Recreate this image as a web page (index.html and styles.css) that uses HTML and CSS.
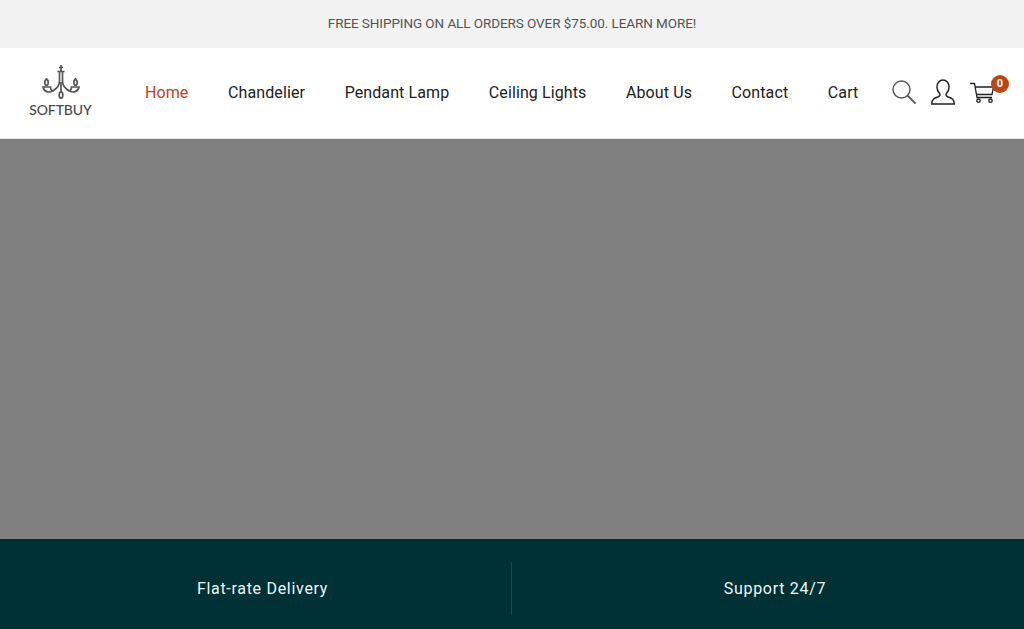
FILE: index.html
```html
<!DOCTYPE html>
<html>
<head>
    <title>Softbuy</title>
    <link rel="stylesheet" href="styles.css">
</head>
<body>
    <div class="top-bar">FREE SHIPPING ON ALL ORDERS OVER $75.00. LEARN MORE!</div>

    <header class="site-header">
        <a class="logo" href="#">
            <svg class="logo-mark" width="40" height="38" viewBox="0 0 40 38" fill="none" stroke="#555" stroke-width="1.700">
                <path d="M20 0v6M18 2.500h4M16.500 6.500h7"/>
                <path d="M18.500 7v9c0 5-3 8-7 10M21.500 7v9c0 5 3 8 7 10"/>
                <path d="M20 17v9"/>
                <path d="M2 22h7.500c0 2.500 1 3.500 2 4-3.500 2-8.500 1-9.500-4zM38 22h-7.500c0 2.500-1 3.500-2 4 3.500 2 8.500 1 9.500-4z"/>
                <ellipse cx="5.500" cy="17.500" rx="1.700" ry="2.800"/>
                <ellipse cx="34.500" cy="17.500" rx="1.700" ry="2.800"/>
                <path d="M5.500 13v1.500M34.500 13v1.500"/>
                <ellipse cx="20" cy="30" rx="1.800" ry="3.200"/>
            </svg>
            <span class="logo-text">SOFTBUY</span>
        </a>

        <nav class="main-nav">
            <a class="active" href="#">Home</a>
            <a href="#">Chandelier</a>
            <a href="#">Pendant Lamp</a>
            <a href="#">Ceiling Lights</a>
            <a href="#">About Us</a>
            <a href="#">Contact</a>
            <a href="#">Cart</a>
        </nav>

        <div class="header-icons">
            <svg width="24" height="24" viewBox="0 0 24 24" fill="none" stroke="#555" stroke-width="1.400">
                <circle cx="9.500" cy="9.500" r="8.500"/>
                <path d="M15.500 15.500l8 8" stroke-width="1.800"/>
            </svg>
            <svg width="24" height="26" viewBox="0 0 24 26" fill="none" stroke="#222" stroke-width="1.500">
                <path d="M.8 25c0-5 2.700-6 6-7 2.500-1 2.500-2.500 1.500-4-1.500-1.500-2.300-3.500-2.300-6 0-4 2.500-7 6-7s6 3 6 7c0 2.500-.8 4.500-2.300 6-1 1.500-1 3 1.500 4 3.300 1 6 2 6 7z"/>
            </svg>
            <div class="cart-icon">
                <svg width="24" height="24" viewBox="0 0 24 24" fill="none" stroke="#222" stroke-width="1.300">
                    <path d="M0 3.500h4.500l2.500 14h15"/>
                    <path d="M5 7h18.500l-1.500 7.500H6.500"/>
                    <circle cx="8.500" cy="20.700" r="1.700"/>
                    <circle cx="20.500" cy="20.700" r="1.700"/>
                </svg>
                <span class="cart-count">0</span>
            </div>
        </div>
    </header>

    <div class="hero"></div>

    <div class="features">
        <div class="feature">Flat-rate Delivery</div>
        <div class="feature">Support 24/7</div>
    </div>
</body>
</html>
```

FILE: styles.css
```css
body {
    margin: 0;
    font-family: Roboto, sans-serif;
    color: #222;
    background: white;
}
a {
    text-decoration: none;
    color: inherit;
}
.top-bar {
    height: 48px;
    line-height: 47px;
    background-color: #f2f2f2;
    color: #555;
    text-align: center;
    font-size: 13.5px;
    letter-spacing: -0.08px;
}
.site-header {
    height: 88px;
    display: flex;
    align-items: center;
    padding: 0 30px 2px 29px;
    border-bottom: 1px solid #e5e5e5;
}
.logo {
    width: 63px;
    margin-bottom: 2px;
    display: flex;
    flex-direction: column;
    align-items: center;
    color: #4a4a4a;
}
.logo-mark {
    display: block;
}
.logo-text {
    font-family: "Lato", sans-serif;
    font-size: 14px;
    font-weight: 500;
    line-height: 14px;
    letter-spacing: -0.1px;
}
.main-nav {
    display: flex;
    gap: 39.6px;
    margin-left: 53px;
    font-size: 16px;
    letter-spacing: 0.1px;
}
.main-nav .active {
    color: #c0401a;
}
.header-icons {
    display: flex;
    align-items: center;
    gap: 15px;
    margin-left: auto;
}
.cart-icon {
    position: relative;
    height: 24px;
}
.cart-count {
    position: absolute;
    top: -5px;
    left: 21px;
    width: 18px;
    height: 18px;
    border-radius: 50%;
    background-color: #bf4510;
    color: white;
    font-size: 11px;
    font-weight: bold;
    line-height: 18px;
    text-align: center;
}
.hero {
    height: 400px;
    background-color: #808080;
}
.features {
    height: 90px;
    background-color: #003135;
    display: flex;
    padding-top: 23px;
    box-sizing: border-box;
    color: #eef6f6;
    font-size: 16px;
}
.feature {
    flex: 0 0 50%;
    box-sizing: border-box;
    height: 53px;
    padding-left: 14px;
    line-height: 54px;
    text-align: center;
    letter-spacing: 0.7px;
}
.feature:first-child {
    border-right: 1px solid #1c474b;
}
```
